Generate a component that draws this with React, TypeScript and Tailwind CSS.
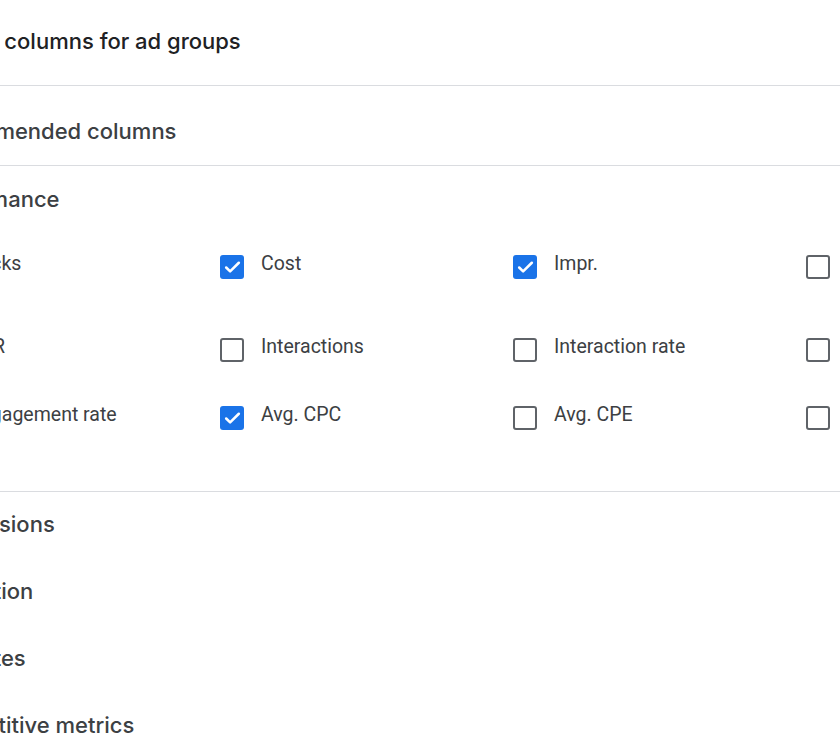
import { Check } from "lucide-react";

const rows = [
    [
        { label: "Clicks", checked: false },
        { label: "Cost", checked: true },
        { label: "Impr.", checked: true },
        { label: "Avg. CPM", checked: false },
    ],
    [
        { label: "CTR", checked: false },
        { label: "Interactions", checked: false },
        { label: "Interaction rate", checked: false },
        { label: "Avg. cost", checked: false },
    ],
    [
        { label: "Engagement rate", checked: false },
        { label: "Avg. CPC", checked: true },
        { label: "Avg. CPE", checked: false },
        { label: "Engagements", checked: false },
    ],
];

const sections = ["Conversions", "Attribution", "Attributes", "Competitive metrics"];

function Box({ checked }: { checked: boolean }) {
    if (checked) {
        return (
            <div className="mt-[3px] w-[24px] h-[24px] shrink-0 rounded-[3px] bg-[#1a73e8] flex items-center justify-center">
                <Check className="w-[19px] h-[19px] text-white" strokeWidth={3.2} />
            </div>
        );
    }
    return <div className="mt-[3px] w-[24px] h-[24px] shrink-0 rounded-[3px] border-2 border-[#5f6368]" />;
}

export default function App() {
    const heading = "font-['Inter',sans-serif] font-medium text-[22px] leading-[24px] text-[#3c4043]";

    return (
        <div className="w-[840px] h-[740px] overflow-hidden bg-white">
            <div className="-ml-[100px] w-[1100px]">
                <div className="h-[86px] border-b border-[#dadce0] pl-[25px] pt-[27px]">
                    <h2 className="font-['Inter',sans-serif] font-medium text-[22px] leading-[28px] text-[#202124]">
                        Modify columns for ad groups
                    </h2>
                </div>

                <div className="h-[80px] border-b border-[#dadce0] pl-[23px] pt-[33px]">
                    <div className={heading}>Recommended columns</div>
                </div>

                <div className="h-[326px] border-b border-[#dadce0]">
                    <div className={`pl-[23px] pt-[21px] ${heading}`}>Performance</div>
                    <div className="mt-[41px] pl-[28px] flex flex-col font-['Roboto',sans-serif] text-[19.5px] leading-[24px] text-[#3c4043]">
                        {rows.map((row, i) => (
                            <div
                                key={i}
                                className={`grid grid-cols-[292px_293px_293px_293px] ${i === 0 ? "h-[83px]" : "h-[68px]"}`}
                            >
                                {row.map((c) => (
                                    <div key={c.label} className="flex items-start gap-[17px]">
                                        <Box checked={c.checked} />
                                        <span>{c.label}</span>
                                    </div>
                                ))}
                            </div>
                        ))}
                    </div>
                </div>

                {sections.map((s) => (
                    <div key={s} className={`h-[67px] pl-[23px] pt-[20px] ${heading}`}>
                        {s}
                    </div>
                ))}
            </div>
        </div>
    );
}
